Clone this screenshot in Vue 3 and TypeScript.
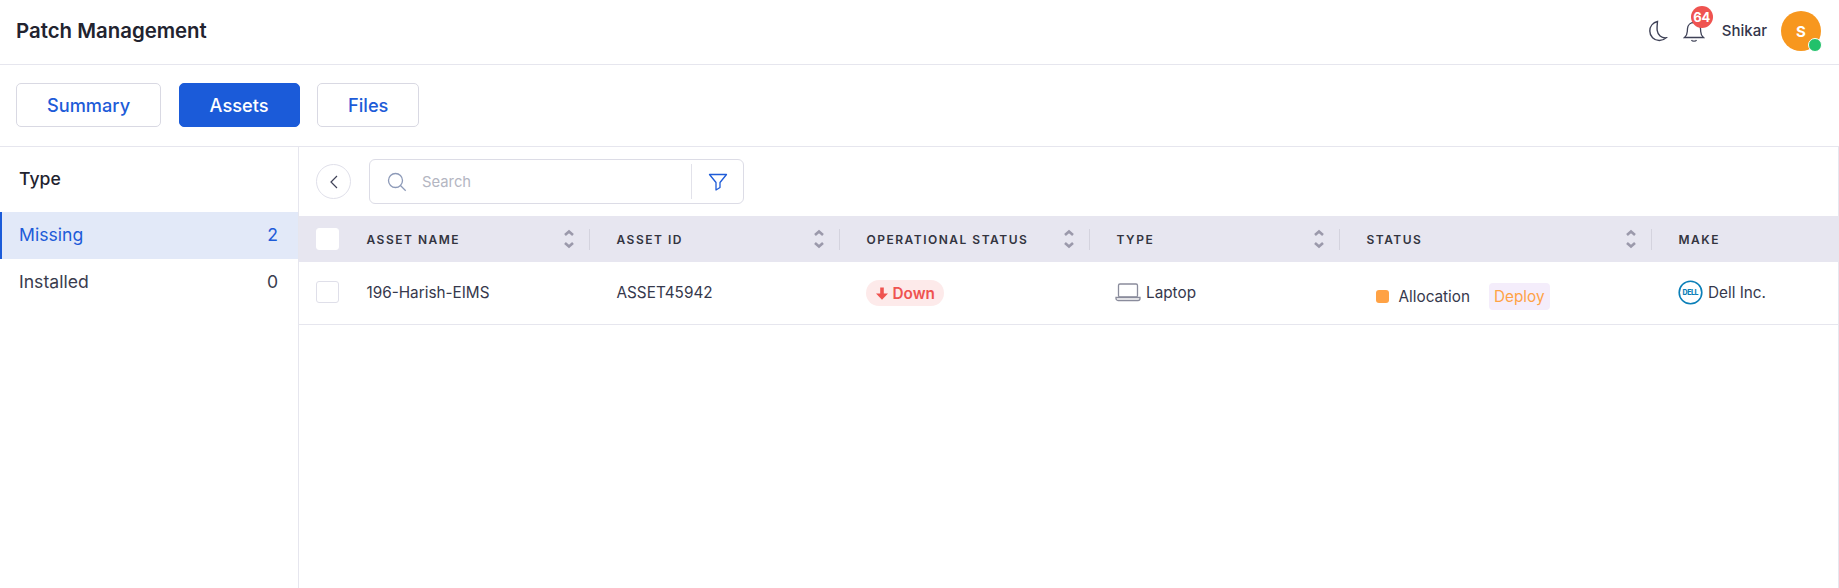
<script setup lang="ts">
interface Col { label: string; sort: boolean }
const cols: Col[] = [
  { label: 'ASSET NAME', sort: true },
  { label: 'ASSET ID', sort: true },
  { label: 'OPERATIONAL STATUS', sort: true },
  { label: 'TYPE', sort: true },
  { label: 'STATUS', sort: true },
  { label: 'MAKE', sort: false },
]
</script>

<template>
  <div class="page">
    <header class="topbar">
      <div class="title">Patch Management</div>
      <div class="top-actions">
        <svg class="moon" width="20" height="22" viewBox="0 0 20 22" fill="none" stroke="#3f4257" stroke-width="1.400">
          <path d="M9.500 1.500C5 2.500 1.800 6.300 1.800 11c0 5.300 4.200 9.500 9.500 9.500 2.600 0 5-1 6.800-2.700-4.700.4-8.300-2.900-8.900-7.300-.4-3 .1-6.200.3-9z" />
        </svg>
        <div class="bell">
          <svg width="22" height="24" viewBox="0 0 22 24" fill="none" stroke="#3f4257" stroke-width="1.300">
            <path d="M1.500 18.500c1.800-1.500 2.700-3.500 2.800-6l.2-3c.3-3.500 3-6 6.500-6s6.200 2.500 6.500 6l.2 3c.1 2.500 1 4.500 2.800 6z" />
            <path d="M8.500 21c.8 1.600 4.200 1.600 5 0" />
          </svg>
          <span class="count">64</span>
        </div>
        <span class="user">Shikar</span>
        <div class="avatar">S<span class="online"></span></div>
      </div>
    </header>

    <nav class="tabs">
      <button class="tab">Summary</button>
      <button class="tab active">Assets</button>
      <button class="tab">Files</button>
    </nav>

    <div class="body">
      <aside class="side">
        <div class="side-title">Type</div>
        <div class="side-row selected"><span>Missing</span><span>2</span></div>
        <div class="side-row"><span>Installed</span><span>0</span></div>
      </aside>

      <main class="main">
        <div class="toolbar">
          <button class="back" aria-label="Back">
            <svg width="10" height="16" viewBox="0 0 10 16" fill="none" stroke="#3f4257" stroke-width="1.200"><path d="M8 2 2 8l6 6" /></svg>
          </button>
          <div class="search">
            <svg class="search-icon" width="22" height="22" viewBox="0 0 22 22" fill="none" stroke="#8d9ab8" stroke-width="1.300">
              <circle cx="9.500" cy="9.500" r="7" /><path d="m14.700 14.700 5 5" />
            </svg>
            <span class="placeholder">Search</span>
            <span class="search-sep"></span>
            <svg class="funnel" width="20" height="18" viewBox="0 0 20 18" fill="none" stroke="#1f5cd8" stroke-width="1.300" stroke-linejoin="round">
              <path d="M1.500 1.500h17l-6.500 8v5l-4 2.500V9.500z" />
            </svg>
          </div>
        </div>

        <div class="grid head">
          <div class="check-cell"><span class="check filled"></span></div>
          <div v-for="c in cols" :key="c.label" class="th">
            <span>{{ c.label }}</span>
            <template v-if="c.sort">
              <svg class="sort" width="12" height="20" viewBox="0 0 12 20" fill="none" stroke="#9b99ab" stroke-width="2.600"><path d="m2 6 4-3.500L10 6M2 14l4 3.500 4-3.500" /></svg>
              <span class="th-sep"></span>
            </template>
          </div>
        </div>

        <div class="grid row">
          <div class="check-cell"><span class="check"></span></div>
          <div class="td">196-Harish-EIMS</div>
          <div class="td">ASSET45942</div>
          <div class="td">
            <span class="down">
              <svg width="12" height="13" viewBox="0 0 12 13" fill="#ef5350"><path d="M4.200 .5h3.600v6H12L6 12.800 0 6.500h4.200z" /></svg>
              Down
            </span>
          </div>
          <div class="td type">
            <svg width="26" height="20" viewBox="0 0 26 20" fill="none" stroke="#8a8c9c" stroke-width="1.300">
              <rect x="3.500" y="2" width="19" height="13" rx="1.500" /><path d="M1 15.500h24v1a2 2 0 0 1-2 2H3a2 2 0 0 1-2-2z" />
            </svg>
            Laptop
          </div>
          <div class="td status">
            <span class="dot"></span>
            <span class="status-text">Allocation</span>
            <span class="deploy">Deploy</span>
          </div>
          <div class="td make">
            <svg width="25" height="25" viewBox="0 0 25 25">
              <circle cx="12.500" cy="12.500" r="11.300" fill="none" stroke="#0a7fb8" stroke-width="1.600" />
              <text x="12.500" y="15" text-anchor="middle" font-size="7" font-weight="800" fill="#0a7fb8" font-family="Inter, sans-serif" textLength="16">DELL</text>
            </svg>
            Dell Inc.
          </div>
        </div>
      </main>
    </div>
  </div>
</template>

<style>
html, body { margin: 0; background: #fff; }
</style>

<style scoped>
.page {
  width: 1839px;
  height: 588px;
  overflow: hidden;
  display: flex;
  flex-direction: column;
  font-family: Inter, "Liberation Sans", sans-serif;
  color: #2d2f3e;
  background: #fff;
}
.topbar {
  height: 65px;
  flex: none;
  box-sizing: border-box;
  border-bottom: 1px solid #e6e6ee;
  display: flex;
  align-items: center;
  justify-content: space-between;
  padding: 0 18px 2px 16px;
}
.title { font-size: 20.400px; font-weight: 600; color: #22232f; margin-top: -1px; }
.top-actions { display: flex; align-items: center; }
.moon { margin-right: 13px; }
.bell { position: relative; width: 22px; height: 24px; margin-right: 17px; margin-left: 2px; display: flex; align-items: center; }
.count {
  position: absolute;
  left: 8px;
  top: -13px;
  width: 22px;
  height: 22px;
  border-radius: 50%;
  background: #ef5350;
  color: #fff;
  font-size: 13px;
  font-weight: 700;
  line-height: 22px;
  text-align: center;
}
.user { font-size: 15px; font-weight: 500; color: #33354a; margin-right: 14px; margin-top: -1px; }
.avatar {
  position: relative;
  width: 40px;
  height: 40px;
  border-radius: 50%;
  background: #f7971e;
  color: #fff;
  font-size: 15px;
  font-weight: 700;
  display: flex;
  align-items: center;
  justify-content: center;
}
.online {
  position: absolute;
  right: -1px;
  bottom: -1px;
  width: 12px;
  height: 12px;
  border-radius: 50%;
  background: #22c16b;
  border: 1.500px solid #fff;
}
.tabs {
  height: 82px;
  flex: none;
  box-sizing: border-box;
  border-bottom: 1px solid #e6e6ee;
  padding: 18px 16px 0;
  display: flex;
  gap: 17.500px;
  align-items: flex-start;
}
.tab {
  height: 44px;
  padding: 0 30px;
  box-sizing: border-box;
  border: 1px solid #d9d9e3;
  border-radius: 5px;
  background: #fff;
  color: #1d5bd8;
  font: 500 18.200px Inter, "Liberation Sans", sans-serif;
}
.tab.active { background: #1b5bd9; border-color: #1b5bd9; color: #fff; }
.body { flex: 1; display: flex; min-height: 0; }
.side { width: 299px; flex: none; box-sizing: border-box; border-right: 1px solid #e6e6ee; }
.side-title { height: 65px; box-sizing: border-box; padding: 20px 20px 0 19px; font-size: 17.600px; font-weight: 500; color: #22232f; line-height: 24px; }
.side-row {
  height: 47px;
  box-sizing: border-box;
  padding: 0 20px 2px 19px;
  display: flex;
  align-items: center;
  justify-content: space-between;
  font-size: 17.600px;
  color: #3a3c4e;
}
.side-row.selected { background: #e2e9f8; color: #1d5bd8; border-left: 2px solid #1b5bd9; padding-left: 17px; }
.main { flex: 1; min-width: 0; border-right: 1px solid #e6e6ee; }
.toolbar { height: 69px; box-sizing: border-box; padding: 12px 0 0 17px; display: flex; gap: 18px; align-items: flex-start; }
.back {
  margin-top: 5px;
  width: 35px;
  height: 35px;
  padding: 0;
  border-radius: 50%;
  border: 1px solid #e0e0ea;
  background: #fff;
  display: flex;
  align-items: center;
  justify-content: center;
}
.search {
  width: 375px;
  height: 45px;
  box-sizing: border-box;
  border: 1px solid #dcdce6;
  border-radius: 6px;
  display: flex;
  align-items: center;
  padding-left: 16px;
}
.placeholder { margin-left: 14px; font-size: 14.800px; color: #b4b6c2; flex: 1; }
.search-sep { width: 1px; height: 35px; background: #e2e2ea; }
.funnel { margin: 0 15px 0 16px; }
.grid { display: grid; grid-template-columns: 68px 250px 250px 250px 250px 312px 1fr; align-items: center; }
.head { height: 46px; background: #e7e6f0; }
.row { height: 63px; padding-bottom: 2px; border-bottom: 1px solid #e6e6ee; box-sizing: border-box; }
.check-cell { padding-left: 17px; display: flex; }
.check { width: 23px; height: 22px; box-sizing: border-box; border: 1px solid #dfdfe9; border-radius: 3px; background: #fff; }
.check.filled { border-color: #fff; }
.th {
  display: flex;
  align-items: center;
  height: 100%;
  padding-right: 18px;
  font-size: 12px;
  font-weight: 600;
  letter-spacing: 1.500px;
  color: #33343f;
  margin-left: -.5px;
}
.th > span:first-child { flex: 1; }
.th-sep { width: 1px; height: 21px; background: #d4d3de; margin-left: 14px; margin-right: 9px; }
.sort { flex: none; }
.td { font-size: 15.300px; color: #36384c; display: flex; align-items: center; margin-left: -.5px; }
.down {
  display: inline-flex;
  align-items: center;
  gap: 5px;
  height: 26px;
  padding: 0 9px 0 10px;
  border-radius: 13px;
  background: #fdeaea;
  color: #ef5350;
  font-weight: 600;
  margin-top: 2px;
  margin-left: -1px;
}
.type { gap: 5px; margin-left: -2px; }
.status { margin-top: 8px; }
.dot { width: 13px; height: 13px; border-radius: 3px; background: #ffa245; margin-left: 9px; }
.status-text { margin-left: 10px; }
.deploy { margin-left: 19px; padding: 0 5px; height: 27px; line-height: 27px; border-radius: 4px; background: #f4edfb; color: #ffa245; }
.make { gap: 5px; margin-left: -1px; }
</style>
